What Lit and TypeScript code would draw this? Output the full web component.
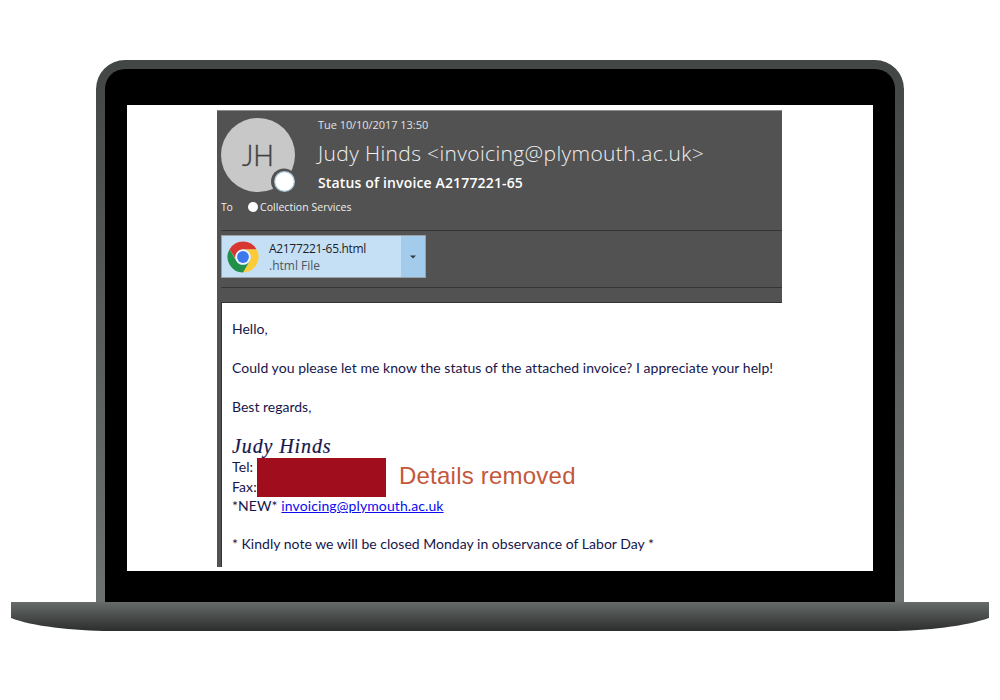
import { LitElement, html, css } from "lit";
import { customElement } from "lit/decorators.js";

@customElement("mail-header")
class MailHeader extends LitElement {
  static styles = css`
    :host { display: block; box-sizing: border-box; height: 193px; padding-left: 4px; background: #525252; border-top: 1px solid #8c8c8c; color: #eee; font-family: "Open Sans", "Noto Sans", sans-serif; white-space: nowrap; }
    .top { display: flex; height: 83px; padding-top: 7px; gap: 23px; }
    .avatar { display: block; width: 74px; height: 78px; flex: none; }
    .initials { font: 300 29px Lato, sans-serif; fill: #404040; stroke: #404040; stroke-width: 0.4px; }
    .text { margin-top: -2px; }
    .date { height: 18px; line-height: 18px; font-size: 11px; letter-spacing: -0.05px; color: #e2e2e2; }
    .name { height: 39px; line-height: 38px; font-size: 21px; font-weight: 300; letter-spacing: 0.36px; color: #f0f0f0; }
    .subject { height: 20px; line-height: 20px; font-size: 14px; font-weight: 600; letter-spacing: 0.15px; color: #fff; }
    .to { display: flex; align-items: center; height: 13px; font-size: 10.5px; line-height: 13px; }
    .to-label { width: 27px; letter-spacing: -0.2px; }
    .dot { width: 10px; height: 10px; border-radius: 50%; background: #fff; margin: -2px 2px 0 0; }
    .who { letter-spacing: 0.04px; }
    .attach { box-sizing: border-box; height: 58px; margin-top: 16px; padding-top: 4px; border-top: 1px solid #363636; border-bottom: 1px solid #363636; }
    .file { display: flex; box-sizing: border-box; width: 205px; height: 43px; border: 1px solid #9aa0a5; background: #c5e0f5; }
    .chrome { width: 32px; height: 32px; margin: 5px 10px 0 5px; flex: none; }
    .names { width: 132px; padding-top: 5px; font-size: 12px; line-height: 16.5px; color: #1e2226; }
    .filename { letter-spacing: -0.32px; }
    .kind { color: #4c555c; }
    .drop { display: flex; align-items: center; justify-content: center; width: 24px; background: #a3cbeb; }
  `;
  render() {
    return html`
      <div class="top">
        <svg class="avatar" viewBox="0 0 74 78">
          <circle cx="37" cy="37" r="37" fill="#c8c8c8" />
          <text class="initials" x="21" y="48" textLength="32" lengthAdjust="spacingAndGlyphs">JH</text>
          <circle cx="63" cy="63.5" r="13" fill="#525252" />
          <circle cx="63.5" cy="63.5" r="10.5" fill="#a9c6d6" />
          <circle cx="63.5" cy="63.5" r="9.3" fill="#fff" />
        </svg>
        <div class="text">
          <div class="date">Tue 10/10/2017 13:50</div>
          <div class="name">Judy Hinds &lt;invoicing@plymouth.ac.uk&gt;</div>
          <div class="subject">Status of invoice A2177221-65</div>
        </div>
      </div>
      <div class="to"><span class="to-label">To</span><span class="dot"></span><span class="who">Collection Services</span></div>
      <div class="attach">
        <div class="file">
          <svg class="chrome" viewBox="0 0 32 32">
            <path d="M29.4 8.3A15.4 15.4 0 0 1 16 31.4L22.7 19.9A7.7 7.7 0 0 0 16 8.3Z" fill="#fccb35" />
            <path d="M16 31.4A15.4 15.4 0 0 1 2.6 8.3L9.3 19.9A7.7 7.7 0 0 0 22.7 19.9Z" fill="#219149" />
            <path d="M2.6 8.3A15.4 15.4 0 0 1 29.4 8.3H16A7.7 7.7 0 0 0 8.4 17.5Z" fill="#d83630" />
            <circle cx="16" cy="16" r="7.5" fill="#f2f6fa" />
            <circle cx="16" cy="16" r="5.9" fill="#3b78ed" />
          </svg>
          <div class="names"><div class="filename">A2177221-65.html</div><div class="kind">.html File</div></div>
          <div class="drop"><svg width="6" height="4" viewBox="0 0 6 4"><path d="M0 .5H6L3 3.5Z" fill="#303a42" /></svg></div>
        </div>
      </div>
    `;
  }
}

@customElement("mail-body")
class MailBody extends LitElement {
  static styles = css`
    :host { display: block; box-sizing: border-box; height: 265px; border-left: 4px solid #525252; color: #16164c; font: 14px/20px Lato, sans-serif; white-space: nowrap; }
    .sheet { box-sizing: border-box; height: 265px; border-left: 1px solid #333; border-top: 1px solid #333; margin-top: -1px; padding: 16px 0 0 10px; }
    .line { height: 20px; margin-bottom: 19px; }
    .ask { letter-spacing: 0.045px; }
    .sign { height: 22px; font: italic 20px/22px "Liberation Serif", serif; letter-spacing: 0.9px; margin-top: -1px; -webkit-text-stroke: 0.2px #16164c; }
    .contact { display: flex; height: 40px; }
    .labels { width: 25px; line-height: 19.5px; letter-spacing: 0.1px; }
    .redacted { width: 129px; height: 39px; margin: 1px 13px 0 0; background: #a00e1e; }
    .removed { color: #c4573a; font: 24px/37px "Liberation Sans", sans-serif; letter-spacing: 0.22px; }
    .new { height: 20px; line-height: 18px; margin-bottom: 17px; letter-spacing: 0.1px; }
    .link { color: #0b0bf0; text-decoration: underline; }
    .note { letter-spacing: 0.02px; }
  `;
  render() {
    return html`<div class="sheet">
      <div class="line">Hello,</div>
      <div class="line ask">Could you please let me know the status of the attached invoice? I appreciate your help!</div>
      <div class="line">Best regards,</div>
      <div class="sign">Judy Hinds</div>
      <div class="contact">
        <div class="labels"><div>Tel:</div><div>Fax:</div></div>
        <div class="redacted"></div>
        <div class="removed">Details removed</div>
      </div>
      <div class="new">*NEW* <span class="link">invoicing@plymouth.ac.uk</span></div>
      <div class="note">* Kindly note we will be closed Monday in observance of Labor Day *</div>
    </div>`;
  }
}

@customElement("app-root")
class AppRoot extends LitElement {
  static styles = css`
    :host { display: flex; flex-direction: column; align-items: center; box-sizing: border-box; width: 1000px; height: 700px; padding-top: 60px; background: #fff; overflow: hidden; }
    .lid { box-sizing: border-box; width: 808px; height: 542px; padding: 9px 9px 0; border-radius: 29px 29px 0 0; background: linear-gradient(#424645, #6c7270); }
    .bezel { box-sizing: border-box; height: 533px; padding: 36px 22px 0; border-radius: 20px 20px 0 0; background: #000; }
    .screen { box-sizing: border-box; width: 746px; height: 466px; padding: 5px 0 0 90px; background: #fff; }
    .mail { display: flow-root; width: 565px; height: 457px; overflow: hidden; }
    .base { display: block; width: 978px; height: 29px; }
  `;
  render() {
    return html`
      <div class="lid"><div class="bezel"><div class="screen"><div class="mail">
        <mail-header></mail-header>
        <mail-body></mail-body>
      </div></div></div></div>
      <svg class="base" viewBox="0 0 978 29">
        <defs><linearGradient id="metal" x1="0" y1="0" x2="0" y2="1"><stop offset="0" stop-color="#676c6a" /><stop offset="1" stop-color="#2c2d2d" /></linearGradient></defs>
        <path d="M0 0H978V16C955 24 916 29 878 29H100C62 29 20 24 0 16Z" fill="url(#metal)" />
      </svg>
    `;
  }
}
